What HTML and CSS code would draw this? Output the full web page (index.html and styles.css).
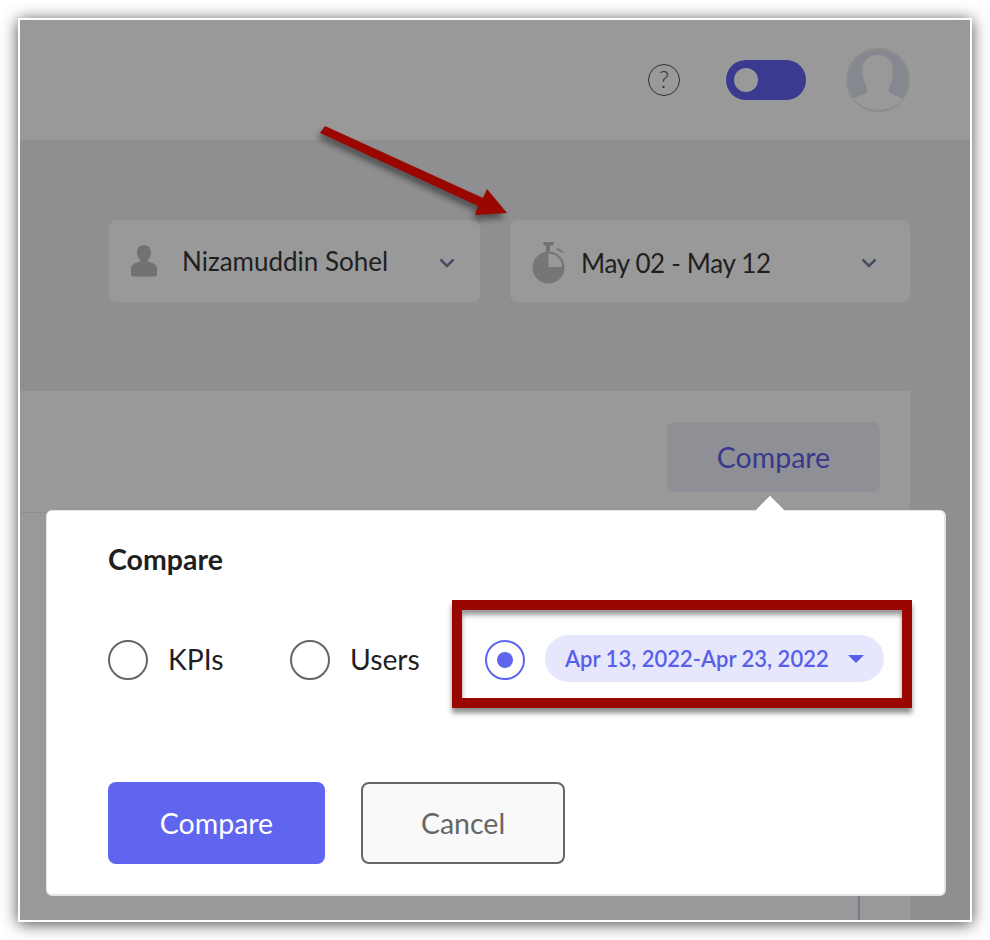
FILE: index.html
```html
<!DOCTYPE html>
<html lang="en">
<head>
    <meta charset="UTF-8">
    <title>Compare</title>
    <link rel="stylesheet" href="styles.css">
</head>
<body>
    <div class="frame">
        <!-- Top bar -->
        <div class="topbar">
            <svg class="help" width="32" height="32" viewBox="0 0 32 32">
                <circle cx="16" cy="16" r="15.500" fill="none" stroke="#333" stroke-width="1"/>
                <text x="16" y="24" text-anchor="middle" class="help-mark">?</text>
            </svg>
            <div class="toggle"><span class="knob"></span></div>
            <svg class="avatar" width="64" height="64" viewBox="0 0 64 64">
                <circle cx="32" cy="32" r="31" fill="#868890" stroke="#8c8c8c" stroke-width="2"/>
                <path d="M32 7C22 7 16 13 16.500 24 17 31 19 36 21 40 22 43 21 45 19 46L7 50C13 58 22 62 32 62S50 58 57 51L46 46C43 45 42 43 43 40 45 36 47 31 47 24 47 13 42 7 32 7z" fill="#999"/>
            </svg>
        </div>

        <div class="main">
            <div class="filters">
                <div class="filter filter-user">
                    <svg width="26" height="32" viewBox="0 0 26 32">
                        <path d="M13 0c4.500 0 7 3.500 7 7.500 0 3-1.500 6-3 7.500v1.500c4 1 9 3 9 7v6c0 1-1 2-2 2H2c-1 0-2-1-2-2v-6c0-4 5-6 9-7V15c-1.500-1.500-3-4.500-3-7.500C6 3.500 8.500 0 13 0z" fill="#727272"/>
                    </svg>
                    <span class="filter-label">Nizamuddin Sohel</span>
                    <svg class="chevron" width="16" height="10" viewBox="0 0 16 10"><path d="M1.500 1.500 8 8l6.500-6.500" fill="none" stroke="#474d63" stroke-width="2.500"/></svg>
                </div>
                <div class="filter filter-date">
                    <svg class="timer" width="34" height="42" viewBox="0 0 34 42">
                        <path d="M12 0h11l-1 3.500h-3V10h-4V3.500h-2z" fill="#727272"/>
                        <path d="m26.500 6 6 3.500-1 1.500-6-3.500z" fill="#727272"/>
                        <circle cx="17.500" cy="25.500" r="16" fill="#767676"/>
                        <path d="M17.500 11.500a13.500 13.500 0 0 1 13.500 13.500H17.500z" fill="#999"/>
                    </svg>
                    <span class="filter-label">May 02 - May 12</span>
                    <svg class="chevron" width="16" height="10" viewBox="0 0 16 10"><path d="M1.500 1.500 8 8l6.500-6.500" fill="none" stroke="#474d63" stroke-width="2.500"/></svg>
                </div>
            </div>

            <div class="panel">
                <div class="panel-head">
                    <div class="compare-btn">Compare</div>
                </div>
                <div class="panel-body"><span class="divider"></span></div>
            </div>
        </div>

        <!-- Popup -->
        <div class="popup">
            <h2>Compare</h2>
            <div class="options">
                <label class="option option-kpi"><span class="radio"></span>KPIs</label>
                <label class="option option-users"><span class="radio"></span>Users</label>
                <div class="option">
                    <span class="radio checked"></span>
                    <div class="range">Apr 13, 2022-Apr 23, 2022<span class="caret"></span></div>
                </div>
            </div>
            <div class="actions">
                <button class="btn btn-primary">Compare</button>
                <button class="btn btn-cancel">Cancel</button>
            </div>
        </div>

        <!-- Annotations -->
        <svg class="arrow" width="200" height="100" viewBox="0 0 200 100">
            <path d="M7 2 165 74 169 65 189 89 157 91 160 82 2 9z" fill="#9a0700"/>
        </svg>
        <div class="highlight"></div>
    </div>
</body>
</html>
```

FILE: styles.css
```css
/* General */
body {
    margin: 0;
    padding: 18px;
    background: #fff;
    font-family: Lato, Arial, sans-serif;
    color: #1f1f1f;
}

.frame {
    position: relative;
    width: 954px;
    height: 904px;
    box-sizing: border-box;
    border: 2px solid #fff;
    display: flex;
    flex-direction: column;
    background: #8f8f91;
    box-shadow: 0 2px 15px rgba(0, 0, 0, 0.7);
}

/* Top bar */
.topbar {
    height: 120px;
    flex: none;
    box-sizing: border-box;
    padding-right: 60px;
    display: flex;
    align-items: center;
    justify-content: flex-end;
    background: #999;
}

.help {
    margin-right: 46px;
}

.help-mark {
    font-family: Lato, Arial, sans-serif;
    font-size: 24px;
    font-weight: 300;
    fill: #333;
}

.toggle {
    width: 80px;
    height: 40px;
    margin-right: 40px;
    box-sizing: border-box;
    padding: 8px;
    border-radius: 20px;
    background: #3a3a90;
}

.knob {
    display: block;
    width: 24px;
    height: 24px;
    border-radius: 50%;
    background: #999;
}

/* Filters */
.main {
    flex: 1;
    display: flex;
    flex-direction: column;
}

.filters {
    display: flex;
    justify-content: flex-end;
    gap: 30px;
    padding: 80px 60px 89px 0;
}

.filter {
    height: 82px;
    box-sizing: border-box;
    display: flex;
    align-items: center;
    border-radius: 8px;
    background: #999;
    font-size: 26px;
}

.filter-user {
    width: 371px;
    padding: 0 25px 0 22px;
}

.filter-date {
    width: 400px;
    padding: 0 33px 0 21px;
}

.filter-label {
    flex: 1;
}

.filter-user .filter-label {
    margin-left: 25px;
}

.filter-date .filter-label {
    margin-left: 16px;
    padding-top: 4px;
    letter-spacing: -0.35px;
}

.timer {
    margin-top: 4px;
}

.chevron {
    margin-top: 3px;
}

/* Panel under the popup */
.panel {
    flex: 1;
    margin-right: 60px;
    display: flex;
    flex-direction: column;
    background: #999;
}

.panel-head {
    height: 122px;
    flex: none;
    box-sizing: border-box;
    padding: 31px 30px 0 0;
    display: flex;
    justify-content: flex-end;
    align-items: flex-start;
    border-bottom: 1px solid #8e8e8e;
}

.compare-btn {
    width: 213px;
    height: 70px;
    line-height: 70px;
    text-align: center;
    border-radius: 8px;
    background: #8f9095;
    color: #38388e;
    font-size: 28.500px;
}

.panel-body {
    flex: 1;
    display: flex;
    justify-content: flex-end;
    align-items: flex-end;
    padding-right: 50px;
}

.divider {
    width: 2px;
    height: 24px;
    background: #767b8e;
}

/* Popup */
.popup {
    position: absolute;
    left: 26px;
    top: 490px;
    width: 900px;
    height: 386px;
    box-sizing: border-box;
    padding: 32px 50px 0 61px;
    border-radius: 6px;
    background: #fff;
    border: 2px solid #e4e4e4;
    border-top-width: 1px;
    border-left-width: 1px;
    display: flex;
    flex-direction: column;
}

.popup::before {
    content: "";
    position: absolute;
    right: 164px;
    top: -11px;
    width: 20px;
    height: 20px;
    background: #fff;
    transform: rotate(45deg);
}

.popup h2 {
    margin: 0;
    font-size: 28.500px;
    line-height: 32px;
    font-weight: 700;
}

.options {
    display: flex;
    align-items: center;
    margin-top: 60px;
    font-size: 28.300px;
    height: 47px;
}

.option {
    display: flex;
    align-items: center;
}

.option-kpi {
    width: 182px;
}

.option-users {
    width: 195px;
}

.radio {
    flex: none;
    width: 40px;
    height: 40px;
    box-sizing: border-box;
    margin: 3px 20px 0 0;
    border: 2px solid #666;
    border-radius: 50%;
    display: flex;
    align-items: center;
    justify-content: center;
}

.radio.checked {
    border-color: #6065f0;
}

.radio.checked::after {
    content: "";
    width: 16px;
    height: 16px;
    border-radius: 50%;
    background: #6065f0;
}

.range {
    width: 339px;
    height: 47px;
    box-sizing: border-box;
    padding: 0 20px;
    display: flex;
    align-items: center;
    justify-content: space-between;
    border-radius: 24px;
    background: #e6e7fc;
    color: #5a5fea;
    font-size: 22px;
    font-weight: 600;
}

.caret {
    border-left: 8px solid transparent;
    border-right: 8px solid transparent;
    border-top: 8px solid #5a5fea;
}

.actions {
    display: flex;
    gap: 36px;
    margin-top: 100px;
}

.btn {
    height: 82px;
    box-sizing: border-box;
    border-radius: 8px;
    font-family: inherit;
    font-size: 28.500px;
}

.btn-primary {
    width: 217px;
    border: none;
    background: #6065f0;
    color: #fff;
}

.btn-cancel {
    width: 204px;
    border: 2px solid #666;
    background: #f9f9f9;
    color: #666;
}

/* Annotations */
.arrow {
    position: absolute;
    left: 298px;
    top: 104px;
    filter: drop-shadow(-2px 5px 3px rgba(0, 0, 0, 0.45));
}

.highlight {
    position: absolute;
    left: 432px;
    top: 580px;
    width: 460px;
    height: 108px;
    box-sizing: border-box;
    border: 10px solid #9a0700;
    box-shadow: 0 5px 5px rgba(0, 0, 0, 0.45), inset 0 5px 5px rgba(0, 0, 0, 0.4);
}
```
